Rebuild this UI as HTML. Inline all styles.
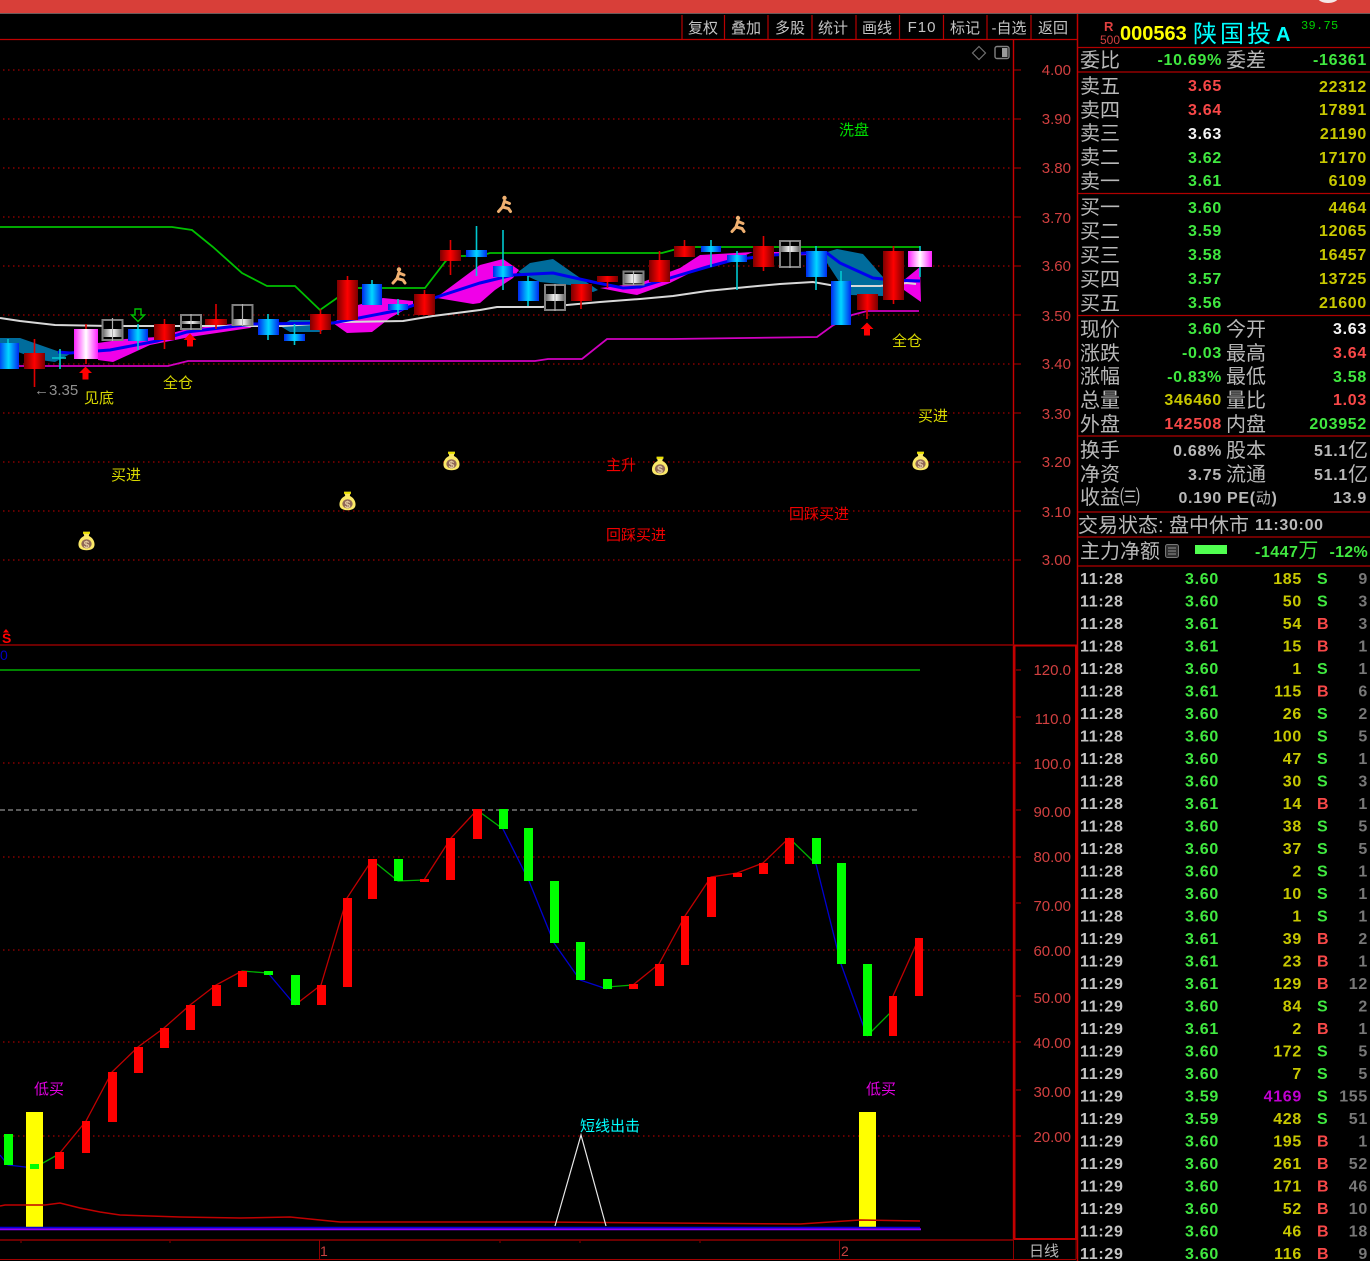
<!DOCTYPE html>
<html><head><meta charset="utf-8"><title>000563</title>
<style>
html,body{margin:0;padding:0;background:#000;width:1370px;height:1261px;overflow:hidden}
svg{display:block}
text{font-family:"Liberation Sans","WenQuanYi Zen Hei","Noto Sans CJK SC",sans-serif}
.btn{font-size:15px;fill:#c4c4c4;text-anchor:middle;font-family:"WenQuanYi Zen Hei","Liberation Sans",sans-serif}
.ax{font-size:15px;fill:#d24040;text-anchor:end}
.cy{font-size:15px;fill:#d8d800;font-family:"WenQuanYi Zen Hei",sans-serif}
.cr{font-size:15px;fill:#f00000;font-family:"WenQuanYi Zen Hei",sans-serif}
.cm{font-size:15px;fill:#e000e0;font-family:"WenQuanYi Zen Hei",sans-serif}
.l{font-size:20px;fill:#b8b8b8;font-family:"WenQuanYi Zen Hei","Liberation Sans",sans-serif}
.n{font-size:16px;font-weight:bold;text-anchor:end;letter-spacing:.7px}
.g{fill:#40e840}.r{fill:#f84848}.y{fill:#c8c800}.w{fill:#f4f4f4}.e{fill:#b8b8b8}
.t{font-size:16px;font-weight:bold;letter-spacing:.7px}
.t1{fill:#c4c4c4}
.c3{fill:#787878}
</style></head><body>
<svg width="1370" height="1261" viewBox="0 0 1370 1261" xmlns="http://www.w3.org/2000/svg">
<defs>
<linearGradient id="R"><stop offset="0" stop-color="#7c0000"/><stop offset=".5" stop-color="#ff0000"/><stop offset="1" stop-color="#7c0000"/></linearGradient>
<linearGradient id="C"><stop offset="0" stop-color="#0028f0"/><stop offset=".5" stop-color="#00d8ff"/><stop offset="1" stop-color="#0028f0"/></linearGradient>
<linearGradient id="P"><stop offset="0" stop-color="#ff20ff"/><stop offset=".5" stop-color="#ffffff"/><stop offset="1" stop-color="#ff20ff"/></linearGradient>
<linearGradient id="W"><stop offset="0" stop-color="#707070"/><stop offset=".5" stop-color="#ffffff"/><stop offset="1" stop-color="#707070"/></linearGradient>
<g id="run" fill="none" stroke="#f0b070" stroke-width="3" stroke-linecap="round" stroke-linejoin="round"><circle cx="0" cy="-6.500" r="2.200" fill="#f0b070" stroke="none"/><path d="M0-3.500L-2 2.500L-6 7M-2 2.500L4 4L6 7M0-3L5-1"/></g>
<g id="bag" transform="scale(1.150)"><path d="M-3-8H3L2-4.500C5-3 7-.5 7 3C7 6.500 4 8-0 8C-4 8-7 6.500-7 3C-7-.5-5-3-2-4.500Z" fill="#fae868"/><ellipse cx="0" cy="2.500" rx="4.500" ry="4" fill="#906858"/><rect x="-3" y="-8" width="6" height="1.800" fill="#e8e000"/><text x="0" y="6" font-size="9" font-weight="bold" text-anchor="middle" fill="#e0c8a0">$</text></g>
<path id="ua" d="M0-6.500L6.500 0H3V6.500H-3V0H-6.500Z" fill="#ff0000"/>
</defs>
<rect width="1370" height="1261" fill="#000"/>
<rect width="1370" height="13" fill="#d83f39"/>
<rect y="13" width="1370" height="1" fill="#6a5a5a"/>
<ellipse cx="1328" cy="-2" rx="10" ry="5" fill="#f4e8e8"/>

<!-- grid -->
<g stroke="#a00000" stroke-width="1.200" stroke-dasharray="1.500 3.500" fill="none">
<path d="M3 70H1012M3 119H1012M3 168H1012M3 217H1012M3 266H1012M3 315H1012M3 364H1012M3 413H1012M3 462H1012M3 511H1012M3 560H1012"/>
<path d="M3 763H1012M3 857H1012M3 950H1012M3 1042H1012M3 1136H1012"/>
</g>

<!-- teal bands -->
<g fill="#006c9c">
<path d="M0 338L20 338L60 352L72 353L55 362L40 360L18 352L0 345Z"/>
<path d="M280 326L290 320L310 320L333 323L320 332L290 332Z"/>
<path d="M518 272L530 263L553 259L573 273L598 290L593 292L570 285L540 282Z"/>
<path d="M827 252L837 249L863 254L883 277L883 296L851 295L840 283L827 263Z"/>
</g>
<!-- magenta bands -->
<g fill="#f000e8">
<path d="M98 343L125 339L157 337L187 329L250 322L258 323L250 328L190 337L150 345L113 362L98 360Z"/>
<path d="M333 323L358 305L383 298L413 301L413 305L390 318L372 332L347 333Z"/>
<path d="M437 297L480 265L503 259L519 270L513 278L495 290L480 303L473 304L437 298Z"/>
<path d="M600 288L640 283L680 268L700 255L753 252L727 263L700 268L670 283L637 295L620 292Z"/>
<path d="M773 252L810 252L810 255L773 256Z"/>
<path d="M904 280L920 267L921 302L904 290Z"/>
</g>
<!-- lines -->
<g fill="none" stroke-width="1.800">
<path stroke="#00c000" d="M0 227H172L192 230L213 247L242 273L267 286H295L320 310L337 298L358 288H425L445 262L450 256H480L490 253H662L673 250L685 247H920"/>
<path stroke="#d8d8d8" stroke-width="2" d="M0 318L20 321L55 325L110 326H283L343 322L403 321L433 316L480 310L497 307H542L567 305L600 302L640 299L673 296L707 291L747 287L780 284L813 282L830 285L850 286L880 286L907 283L916 284"/>
<path stroke="#d000c0" d="M0 366H168L188 361H535L548 359H582L607 339H672L817 337L832 326L852 315L867 311H919"/>
<path stroke="#0000f0" stroke-width="3" d="M58 352L70 353L110 350L157 341L187 332L253 324L333 323L400 310L437 297L480 283L513 275L553 273L593 282L623 288L640 287L680 275L707 267L733 260L773 255L807 253L827 253L840 263L873 278L893 280L920 281"/>
</g>

<!-- wicks -->
<g stroke="#e00000" stroke-width="1.600" fill="none">
<path d="M34.500 339V387M86 324V364M164.500 319V349M216 304V329M320.500 309V334M347.500 276V320M424.500 290V315M450.500 240V275M581 284V309M607.500 276V288M659.500 251V282M684.500 240V257M763.500 236V271M867 294V319M893.500 246V304"/>
</g>
<g stroke="#00c8d0" stroke-width="1.600" fill="none">
<path d="M8 339V369M60 349V369M52 358H66M138 324V350M268 314V340M294.500 324V345M372 280V305M398 299V315M476.500 226V276M503 230V290M528 276V306M711 240V267M737 251V290M816 246V290M841 271V325M920 246V277"/>
</g>
<!-- red candles -->
<g fill="url(#R)">
<rect x="24" y="353" width="21" height="16"/><rect x="154" y="324" width="21" height="16"/><rect x="205" y="319" width="22" height="6"/><rect x="310" y="314" width="21" height="16"/><rect x="337" y="280" width="21" height="40"/><rect x="414" y="294" width="21" height="21"/><rect x="440" y="250" width="21" height="11"/><rect x="571" y="284" width="21" height="17"/><rect x="597" y="276" width="21" height="6"/><rect x="649" y="260" width="21" height="22"/><rect x="674" y="246" width="21" height="11"/><rect x="753" y="246" width="21" height="21"/><rect x="857" y="294" width="21" height="16"/><rect x="883" y="251" width="21" height="49"/>
</g>
<!-- cyan candles -->
<g fill="url(#C)">
<rect x="-2" y="343" width="21" height="26"/><rect x="128" y="329" width="20" height="12"/><rect x="258" y="319" width="21" height="16"/><rect x="284" y="334" width="21" height="7"/><rect x="362" y="284" width="20" height="21"/><rect x="388" y="304" width="20" height="6"/><rect x="466" y="250" width="21" height="7"/><rect x="493" y="266" width="20" height="11"/><rect x="518" y="281" width="21" height="20"/><rect x="701" y="246" width="20" height="6"/><rect x="727" y="255" width="20" height="7"/><rect x="806" y="251" width="21" height="26"/><rect x="831" y="281" width="20" height="44"/>
</g>
<!-- pink candles -->
<rect x="74" y="329" width="24" height="30" fill="url(#P)"/>
<rect x="908" y="251" width="24" height="16" fill="url(#P)"/>
<!-- hollow candles -->
<g fill="#000" stroke="#808080" stroke-width="2">
<rect x="102.500" y="320" width="20" height="20"/><rect x="181" y="315" width="20" height="14"/><rect x="232.500" y="305" width="20" height="20"/><rect x="545" y="285" width="20" height="25"/><rect x="623.500" y="271.500" width="20" height="13"/><rect x="780" y="241" width="20" height="26"/>
</g>
<g fill="url(#W)">
<rect x="103" y="329" width="19" height="8"/><rect x="182" y="321" width="18" height="3"/><rect x="233" y="319" width="19" height="6"/><rect x="546" y="294" width="18" height="7"/><rect x="624" y="274" width="19" height="9"/><rect x="781" y="246" width="18" height="6"/>
</g>
<g stroke="#b0b0b0" stroke-width="1.200"><path d="M112.500 318V341M191 314V330M242.500 304V326M555 284V311M633.500 271V285M790 241V268"/></g>

<!-- arrows, icons -->
<use href="#ua" x="85.500" y="373"/><use href="#ua" x="190" y="340"/><use href="#ua" x="867" y="329"/>
<path d="M135 309H141V315H144.500L138 321.500L131.500 315H135Z" fill="none" stroke="#00c000" stroke-width="1.400"/>
<use href="#run" x="399" y="276"/><use href="#run" x="504.500" y="204.500"/><use href="#run" x="738" y="224.500"/>
<use href="#bag" x="86.500" y="541"/><use href="#bag" x="347.500" y="501"/><use href="#bag" x="451.500" y="461"/><use href="#bag" x="660" y="466"/><use href="#bag" x="920.500" y="461"/>
<path d="M979 46.500L985.500 53L979 59.500L972.500 53Z" fill="none" stroke="#707070" stroke-width="1.200"/>
<rect x="995" y="46.500" width="14" height="12" rx="2" fill="none" stroke="#808080" stroke-width="1.400"/><rect x="1002" y="48" width="5.500" height="9" fill="#9a9a9a"/>

<!-- chart labels -->
<text x="34" y="395" font-size="15" fill="#909090">←3.35</text>
<text x="84" y="403" class="cy">见底</text>
<text x="163" y="388" class="cy">全仓</text>
<text x="892" y="346" class="cy">全仓</text>
<text x="918" y="421" class="cy">买进</text>
<text x="111" y="480" class="cy">买进</text>
<text x="839" y="135" style="font-size:15px;fill:#00e000;font-family:'WenQuanYi Zen Hei',sans-serif">洗盘</text>
<text x="606" y="470" class="cr">主升</text>
<text x="606" y="540" class="cr">回踩买进</text>
<text x="789" y="519" class="cr">回踩买进</text>

<!-- lower panel lines -->
<path d="M0 670H920" stroke="#00b000" stroke-width="1.500"/>
<path d="M0 810H918" stroke="#909090" stroke-width="1.200" stroke-dasharray="5 3"/>
<g fill="none" stroke-width="1.300">
<path stroke="#0000d0" d="M0 1155L8 1165L34 1168"/>
<path stroke="#00b000" d="M34 1168L59 1154"/>
<path stroke="#c00000" d="M59 1154L86 1121L112 1072L138 1047L164 1028L190 1005L216 985L242 971"/>
<path stroke="#00b000" d="M242 971L268 973"/>
<path stroke="#0000d0" d="M268 973L295 1005"/>
<path stroke="#c00000" d="M295 1005L321 985L347 898L372 860"/>
<path stroke="#00b000" d="M372 860L398 881L424 880"/>
<path stroke="#c00000" d="M424 880L451 838L477 810"/>
<path stroke="#00b000" d="M477 810L503 829"/>
<path stroke="#0000d0" d="M503 829L529 881L554 943L580 980L607 989"/>
<path stroke="#00b000" d="M607 987L633 985"/>
<path stroke="#c00000" d="M633 985L659 964L685 916L711 877L737 873L763 863L789 838"/>
<path stroke="#00b000" d="M789 838L816 864"/>
<path stroke="#0000d0" d="M816 864L841 964L867 1036"/>
<path stroke="#00b000" d="M867 1036L893 1010"/>
<path stroke="#c00000" d="M893 996L919 938"/>
</g>
<!-- yellow bars -->
<rect x="26" y="1112" width="17" height="115" fill="#ffff00"/>
<rect x="859" y="1112" width="17" height="115" fill="#ffff00"/>
<!-- red bars -->
<g fill="#ff0000">
<rect x="55" y="1152" width="9" height="17"/><rect x="82" y="1121" width="8" height="32"/><rect x="108" y="1072" width="9" height="50"/><rect x="134" y="1047" width="9" height="26"/><rect x="160" y="1028" width="9" height="20"/><rect x="186" y="1005" width="9" height="25"/><rect x="212" y="985" width="9" height="21"/><rect x="238" y="971" width="9" height="16"/><rect x="317" y="985" width="9" height="20"/><rect x="343" y="898" width="9" height="89"/><rect x="368" y="859" width="9" height="40"/><rect x="420" y="879" width="9" height="3"/><rect x="446" y="838" width="9" height="42"/><rect x="473" y="809" width="9" height="30"/><rect x="629" y="984" width="9" height="5"/><rect x="655" y="964" width="9" height="22"/><rect x="681" y="916" width="8" height="49"/><rect x="707" y="877" width="9" height="40"/><rect x="733" y="873" width="9" height="4"/><rect x="759" y="863" width="9" height="11"/><rect x="785" y="838" width="9" height="26"/><rect x="889" y="996" width="8" height="40"/><rect x="915" y="938" width="8" height="58"/>
</g>
<!-- green bars -->
<g fill="#00ff00">
<rect x="4" y="1134" width="9" height="31"/><rect x="30" y="1164" width="9" height="5"/><rect x="264" y="971" width="9" height="4"/><rect x="291" y="975" width="9" height="30"/><rect x="394" y="859" width="9" height="22"/><rect x="499" y="809" width="9" height="20"/><rect x="524" y="828" width="9" height="53"/><rect x="550" y="881" width="9" height="62"/><rect x="576" y="942" width="9" height="38"/><rect x="603" y="979" width="9" height="10"/><rect x="812" y="838" width="9" height="26"/><rect x="837" y="863" width="9" height="101"/><rect x="863" y="964" width="9" height="72"/>
</g>
<!-- bottom lines -->
<path d="M0 1206L5 1205H45L60 1203L80 1208L100 1212L120 1215L180 1217L240 1218L290 1217L320 1220L340 1222H520L540 1222L800 1224L860 1220L920 1221" fill="none" stroke="#c00000" stroke-width="1.500"/>
<path d="M0 1227.500H920" stroke="#0000e0" stroke-width="1.600"/>
<path d="M0 1229.300H921" stroke="#9000ff" stroke-width="1.800"/>
<path d="M555 1226L581 1135L606 1226" fill="none" stroke="#e8e8e8" stroke-width="1.200"/>
<text x="580" y="1131" style="font-size:15px;fill:#00ffff;font-family:'WenQuanYi Zen Hei',sans-serif">短线出击</text>
<text x="34" y="1094" class="cm">低买</text>
<text x="866" y="1094" class="cm">低买</text>
<text x="2" y="643" font-size="14" font-weight="bold" fill="#ff0000">S</text>
<path d="M6 629L9 632.500H3Z" fill="#ff0000"/>
<text x="0" y="660" font-size="14" fill="#0000c0">0</text>

<!-- frames -->
<path d="M0 39.500H1077" stroke="#c00000" stroke-width="1.200"/>
<path d="M682 15V39M724.500 15V39M768 15V39M812 15V39M856 15V39M899.500 15V39M943.500 15V39M987 15V39M1031 15V39" stroke="#b80000" stroke-width="1.200"/>
<path d="M1013.500 40V1240" stroke="#c80000" stroke-width="1.400"/>
<path d="M0 645H1014" stroke="#900000" stroke-width="1.600"/>
<rect x="1014.500" y="645.500" width="61.500" height="593.500" fill="none" stroke="#c00000" stroke-width="2"/>
<path d="M1077.500 14V1261" stroke="#c00000" stroke-width="1.500"/>
<path d="M0 1240H1014" stroke="#900000" stroke-width="1.500"/>
<path d="M0 1259.500H1076" stroke="#a00000" stroke-width="1"/>
<path d="M319.500 1240V1259M839.500 1240V1259M1013.500 1240V1259M1076 1240V1259" stroke="#900000" stroke-width="1"/>
<path d="M21 1241V1243M170 1241V1243M500 1241V1243M580 1241V1243M700 1241V1243" stroke="#900000"/>
<path d="M1014 70H1021M1014 119H1021M1014 168H1021M1014 217H1021M1014 266H1021M1014 315H1021M1014 364H1021M1014 413H1021M1014 462H1021M1014 511H1021M1014 560H1021M1016 670H1021M1016 717H1021M1016 763H1021M1016 810H1021M1016 857H1021M1016 903H1021M1016 950H1021M1016 996H1021M1016 1042H1021M1016 1090H1021M1016 1136H1021" stroke="#b00000"/>

<!-- toolbar -->
<text x="703" y="33" class="btn">复权</text><text x="746" y="33" class="btn">叠加</text><text x="790" y="33" class="btn">多股</text><text x="833" y="33" class="btn">统计</text><text x="877" y="33" class="btn">画线</text>
<text x="922" y="32" text-anchor="middle" font-size="15" fill="#c4c4c4" letter-spacing="1">F10</text>
<text x="965" y="33" class="btn">标记</text><text x="1009" y="33" class="btn">-自选</text><text x="1053" y="33" class="btn">返回</text>

<!-- price axis -->
<g class="ax" text-anchor="end">
<text class="ax" x="1071" y="75">4.00</text><text class="ax" x="1071" y="124">3.90</text><text class="ax" x="1071" y="173">3.80</text><text class="ax" x="1071" y="223">3.70</text><text class="ax" x="1071" y="271">3.60</text><text class="ax" x="1071" y="321">3.50</text><text class="ax" x="1071" y="369">3.40</text><text class="ax" x="1071" y="419">3.30</text><text class="ax" x="1071" y="467">3.20</text><text class="ax" x="1071" y="517">3.10</text><text class="ax" x="1071" y="565">3.00</text>
<text class="ax" x="1071" y="675">120.0</text><text class="ax" x="1071" y="724">110.0</text><text class="ax" x="1071" y="769">100.0</text><text class="ax" x="1071" y="817">90.00</text><text class="ax" x="1071" y="862">80.00</text><text class="ax" x="1071" y="911">70.00</text><text class="ax" x="1071" y="956">60.00</text><text class="ax" x="1071" y="1003">50.00</text><text class="ax" x="1071" y="1048">40.00</text><text class="ax" x="1071" y="1097">30.00</text><text class="ax" x="1071" y="1142">20.00</text>
</g>
<text x="320" y="1256" font-size="14" fill="#c84040">1</text>
<text x="841" y="1256" font-size="14" fill="#c84040">2</text>
<text x="1029" y="1256" font-size="15" fill="#b8b8b8" style="font-family:'WenQuanYi Zen Hei',sans-serif">日线</text>

<!-- quote header -->
<text x="1104" y="31" font-size="13" font-weight="bold" fill="#e04040">R</text>
<text x="1100" y="44" font-size="12" fill="#d04040">500</text>
<text x="1120" y="40" font-size="20" font-weight="bold" fill="#ffff00">000563</text>
<text x="1193" y="42" font-size="24" fill="#00ffff" letter-spacing="3" style="font-family:'WenQuanYi Zen Hei',sans-serif">陕国投</text>
<text x="1276" y="41" font-size="20" font-weight="bold" fill="#00ffff">A</text>
<text x="1301" y="29" font-size="12" fill="#00d000" letter-spacing=".3" style="font-family:'Liberation Mono',monospace">39.75</text>
<path d="M1078 47.500H1370M1078 72H1370M1078 193.500H1370M1078 315.500H1370M1078 436H1370M1078 512H1370M1078 537H1370M1078 566H1370" stroke="#b00000" stroke-width="1.200"/>

<text x="1080" y="67" class="l">委比</text><text x="1222" y="65" class="n g">-10.69%</text><text x="1226" y="67" class="l">委差</text><text x="1367" y="65" class="n g">-16361</text>
<text x="1080" y="93" class="l">卖五</text><text x="1222" y="91" class="n r">3.65</text><text x="1367" y="92" class="n y">22312</text>
<text x="1080" y="117" class="l">卖四</text><text x="1222" y="115" class="n r">3.64</text><text x="1367" y="115" class="n y">17891</text>
<text x="1080" y="140" class="l">卖三</text><text x="1222" y="139" class="n w">3.63</text><text x="1367" y="139" class="n y">21190</text>
<text x="1080" y="164" class="l">卖二</text><text x="1222" y="163" class="n g">3.62</text><text x="1367" y="163" class="n y">17170</text>
<text x="1080" y="188" class="l">卖一</text><text x="1222" y="186" class="n g">3.61</text><text x="1367" y="186" class="n y">6109</text>
<text x="1080" y="214" class="l">买一</text><text x="1222" y="213" class="n g">3.60</text><text x="1367" y="213" class="n y">4464</text>
<text x="1080" y="238" class="l">买二</text><text x="1222" y="236" class="n g">3.59</text><text x="1367" y="236" class="n y">12065</text>
<text x="1080" y="262" class="l">买三</text><text x="1222" y="260" class="n g">3.58</text><text x="1367" y="260" class="n y">16457</text>
<text x="1080" y="286" class="l">买四</text><text x="1222" y="284" class="n g">3.57</text><text x="1367" y="284" class="n y">13725</text>
<text x="1080" y="310" class="l">买五</text><text x="1222" y="308" class="n g">3.56</text><text x="1367" y="308" class="n y">21600</text>

<text x="1080" y="336" class="l">现价</text><text x="1222" y="334" class="n g">3.60</text><text x="1226" y="336" class="l">今开</text><text x="1367" y="334" class="n w">3.63</text>
<text x="1080" y="360" class="l">涨跌</text><text x="1222" y="358" class="n g">-0.03</text><text x="1226" y="360" class="l">最高</text><text x="1367" y="358" class="n r">3.64</text>
<text x="1080" y="383" class="l">涨幅</text><text x="1222" y="382" class="n g">-0.83%</text><text x="1226" y="383" class="l">最低</text><text x="1367" y="382" class="n g">3.58</text>
<text x="1080" y="407" class="l">总量</text><text x="1222" y="405" class="n y">346460</text><text x="1226" y="407" class="l">量比</text><text x="1367" y="405" class="n r">1.03</text>
<text x="1080" y="431" class="l">外盘</text><text x="1222" y="429" class="n r">142508</text><text x="1226" y="431" class="l">内盘</text><text x="1367" y="429" class="n g">203952</text>

<text x="1080" y="457" class="l">换手</text><text x="1222" y="456" class="n e">0.68%</text><text x="1226" y="457" class="l">股本</text><text x="1348" y="456" class="n e">51.1</text><text x="1348" y="457" class="l">亿</text>
<text x="1080" y="481" class="l">净资</text><text x="1222" y="480" class="n e">3.75</text><text x="1226" y="481" class="l">流通</text><text x="1348" y="480" class="n e">51.1</text><text x="1348" y="481" class="l">亿</text>
<text x="1080" y="504" class="l">收益㈢</text><text x="1222" y="503" class="n e">0.190</text><text x="1227" y="503" class="t e" style="font-size:16px">PE(<tspan style="font-size:15px;font-family:'WenQuanYi Zen Hei',sans-serif;font-weight:normal">动</tspan>)</text><text x="1367" y="503" class="n e">13.9</text>

<text x="1078" y="532" class="l">交易状态:</text><text x="1169" y="532" class="l">盘中休市</text><text x="1255" y="530" class="t e">11:30:00</text>
<text x="1080" y="558" class="l">主力净额</text>
<rect x="1165.500" y="544.500" width="13" height="13" rx="2" fill="#303030" stroke="#787878"/><path d="M1168 548H1176M1168 551H1176M1168 554H1176" stroke="#909090"/>
<rect x="1195" y="545" width="32" height="9" fill="#50ff50"/>
<text x="1255" y="557" class="t g" style="letter-spacing:.5px">-1447<tspan class="l" style="fill:#40e840;font-weight:normal;letter-spacing:0">万</tspan></text>
<text x="1368" y="557" class="n g" style="letter-spacing:.3px">-12%</text>

<!-- ticks -->
<g class="t">
<text class="t t1" x="1080" y="584">11:28</text><text class="n g" x="1219" y="584">3.60</text><text class="n y" x="1302" y="584">185</text><text class="t g" x="1317" y="584">S</text><text class="n c3" x="1368" y="584">9</text>
<text class="t t1" x="1080" y="606.500">11:28</text><text class="n g" x="1219" y="606.500">3.60</text><text class="n y" x="1302" y="606.500">50</text><text class="t g" x="1317" y="606.500">S</text><text class="n c3" x="1368" y="606.500">3</text>
<text class="t t1" x="1080" y="629">11:28</text><text class="n g" x="1219" y="629">3.61</text><text class="n y" x="1302" y="629">54</text><text class="t r" x="1317" y="629">B</text><text class="n c3" x="1368" y="629">3</text>
<text class="t t1" x="1080" y="651.500">11:28</text><text class="n g" x="1219" y="651.500">3.61</text><text class="n y" x="1302" y="651.500">15</text><text class="t r" x="1317" y="651.500">B</text><text class="n c3" x="1368" y="651.500">1</text>
<text class="t t1" x="1080" y="674">11:28</text><text class="n g" x="1219" y="674">3.60</text><text class="n y" x="1302" y="674">1</text><text class="t g" x="1317" y="674">S</text><text class="n c3" x="1368" y="674">1</text>
<text class="t t1" x="1080" y="696.500">11:28</text><text class="n g" x="1219" y="696.500">3.61</text><text class="n y" x="1302" y="696.500">115</text><text class="t r" x="1317" y="696.500">B</text><text class="n c3" x="1368" y="696.500">6</text>
<text class="t t1" x="1080" y="719">11:28</text><text class="n g" x="1219" y="719">3.60</text><text class="n y" x="1302" y="719">26</text><text class="t g" x="1317" y="719">S</text><text class="n c3" x="1368" y="719">2</text>
<text class="t t1" x="1080" y="741.500">11:28</text><text class="n g" x="1219" y="741.500">3.60</text><text class="n y" x="1302" y="741.500">100</text><text class="t g" x="1317" y="741.500">S</text><text class="n c3" x="1368" y="741.500">5</text>
<text class="t t1" x="1080" y="764">11:28</text><text class="n g" x="1219" y="764">3.60</text><text class="n y" x="1302" y="764">47</text><text class="t g" x="1317" y="764">S</text><text class="n c3" x="1368" y="764">1</text>
<text class="t t1" x="1080" y="786.500">11:28</text><text class="n g" x="1219" y="786.500">3.60</text><text class="n y" x="1302" y="786.500">30</text><text class="t g" x="1317" y="786.500">S</text><text class="n c3" x="1368" y="786.500">3</text>
<text class="t t1" x="1080" y="809">11:28</text><text class="n g" x="1219" y="809">3.61</text><text class="n y" x="1302" y="809">14</text><text class="t r" x="1317" y="809">B</text><text class="n c3" x="1368" y="809">1</text>
<text class="t t1" x="1080" y="831.500">11:28</text><text class="n g" x="1219" y="831.500">3.60</text><text class="n y" x="1302" y="831.500">38</text><text class="t g" x="1317" y="831.500">S</text><text class="n c3" x="1368" y="831.500">5</text>
<text class="t t1" x="1080" y="854">11:28</text><text class="n g" x="1219" y="854">3.60</text><text class="n y" x="1302" y="854">37</text><text class="t g" x="1317" y="854">S</text><text class="n c3" x="1368" y="854">5</text>
<text class="t t1" x="1080" y="876.500">11:28</text><text class="n g" x="1219" y="876.500">3.60</text><text class="n y" x="1302" y="876.500">2</text><text class="t g" x="1317" y="876.500">S</text><text class="n c3" x="1368" y="876.500">1</text>
<text class="t t1" x="1080" y="899">11:28</text><text class="n g" x="1219" y="899">3.60</text><text class="n y" x="1302" y="899">10</text><text class="t g" x="1317" y="899">S</text><text class="n c3" x="1368" y="899">1</text>
<text class="t t1" x="1080" y="921.500">11:28</text><text class="n g" x="1219" y="921.500">3.60</text><text class="n y" x="1302" y="921.500">1</text><text class="t g" x="1317" y="921.500">S</text><text class="n c3" x="1368" y="921.500">1</text>
<text class="t t1" x="1080" y="944">11:29</text><text class="n g" x="1219" y="944">3.61</text><text class="n y" x="1302" y="944">39</text><text class="t r" x="1317" y="944">B</text><text class="n c3" x="1368" y="944">2</text>
<text class="t t1" x="1080" y="966.500">11:29</text><text class="n g" x="1219" y="966.500">3.61</text><text class="n y" x="1302" y="966.500">23</text><text class="t r" x="1317" y="966.500">B</text><text class="n c3" x="1368" y="966.500">1</text>
<text class="t t1" x="1080" y="989">11:29</text><text class="n g" x="1219" y="989">3.61</text><text class="n y" x="1302" y="989">129</text><text class="t r" x="1317" y="989">B</text><text class="n c3" x="1368" y="989">12</text>
<text class="t t1" x="1080" y="1011.500">11:29</text><text class="n g" x="1219" y="1011.500">3.60</text><text class="n y" x="1302" y="1011.500">84</text><text class="t g" x="1317" y="1011.500">S</text><text class="n c3" x="1368" y="1011.500">2</text>
<text class="t t1" x="1080" y="1034">11:29</text><text class="n g" x="1219" y="1034">3.61</text><text class="n y" x="1302" y="1034">2</text><text class="t r" x="1317" y="1034">B</text><text class="n c3" x="1368" y="1034">1</text>
<text class="t t1" x="1080" y="1056.500">11:29</text><text class="n g" x="1219" y="1056.500">3.60</text><text class="n y" x="1302" y="1056.500">172</text><text class="t g" x="1317" y="1056.500">S</text><text class="n c3" x="1368" y="1056.500">5</text>
<text class="t t1" x="1080" y="1079">11:29</text><text class="n g" x="1219" y="1079">3.60</text><text class="n y" x="1302" y="1079">7</text><text class="t g" x="1317" y="1079">S</text><text class="n c3" x="1368" y="1079">5</text>
<text class="t t1" x="1080" y="1101.500">11:29</text><text class="n g" x="1219" y="1101.500">3.59</text><text class="n" fill="#c000d0" x="1302" y="1101.500">4169</text><text class="t g" x="1317" y="1101.500">S</text><text class="n c3" x="1368" y="1101.500">155</text>
<text class="t t1" x="1080" y="1124">11:29</text><text class="n g" x="1219" y="1124">3.59</text><text class="n y" x="1302" y="1124">428</text><text class="t g" x="1317" y="1124">S</text><text class="n c3" x="1368" y="1124">51</text>
<text class="t t1" x="1080" y="1146.500">11:29</text><text class="n g" x="1219" y="1146.500">3.60</text><text class="n y" x="1302" y="1146.500">195</text><text class="t r" x="1317" y="1146.500">B</text><text class="n c3" x="1368" y="1146.500">1</text>
<text class="t t1" x="1080" y="1169">11:29</text><text class="n g" x="1219" y="1169">3.60</text><text class="n y" x="1302" y="1169">261</text><text class="t r" x="1317" y="1169">B</text><text class="n c3" x="1368" y="1169">52</text>
<text class="t t1" x="1080" y="1191.500">11:29</text><text class="n g" x="1219" y="1191.500">3.60</text><text class="n y" x="1302" y="1191.500">171</text><text class="t r" x="1317" y="1191.500">B</text><text class="n c3" x="1368" y="1191.500">46</text>
<text class="t t1" x="1080" y="1214">11:29</text><text class="n g" x="1219" y="1214">3.60</text><text class="n y" x="1302" y="1214">52</text><text class="t r" x="1317" y="1214">B</text><text class="n c3" x="1368" y="1214">10</text>
<text class="t t1" x="1080" y="1236.500">11:29</text><text class="n g" x="1219" y="1236.500">3.60</text><text class="n y" x="1302" y="1236.500">46</text><text class="t r" x="1317" y="1236.500">B</text><text class="n c3" x="1368" y="1236.500">18</text>
<text class="t t1" x="1080" y="1259">11:29</text><text class="n g" x="1219" y="1259">3.60</text><text class="n y" x="1302" y="1259">116</text><text class="t r" x="1317" y="1259">B</text><text class="n c3" x="1368" y="1259">9</text>
</g>
</svg>
</body></html>
